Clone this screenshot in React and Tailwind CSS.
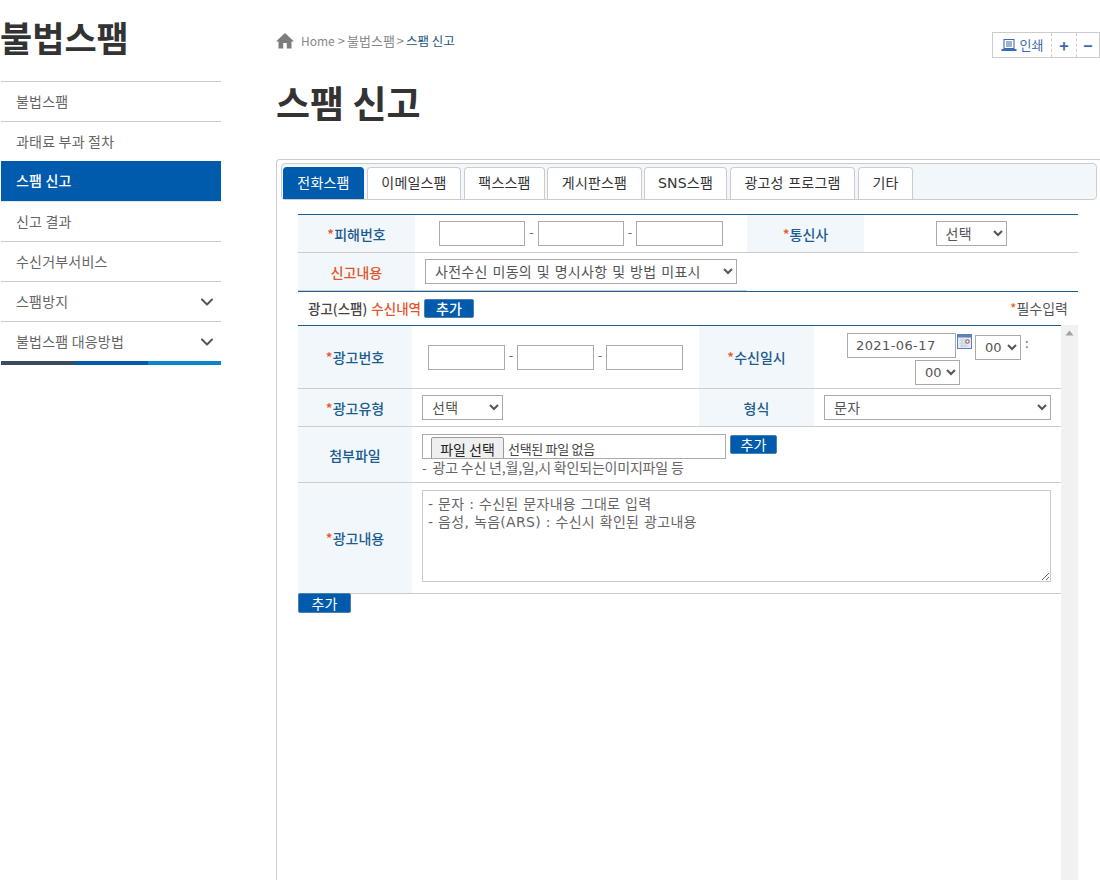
import React from "react";
import { ChevronDown } from "lucide-react";

const Star = () => <span className="text-[#e8562a]">*</span>;
const Th = ({ w, star, children, orange, h }) => (
  <div className={`${w} ${h || ""} shrink-0 bg-[#f2f7fb] pt-px flex items-center justify-center text-[14px] font-medium ${orange ? "text-[#e2562c]" : "text-[#1c5c8f]"}`}>
    {star && <Star />}
    {children}
  </div>
);
const Txt = ({ w }) => <input type="text" className={`${w} h-[25px] border border-[#aaa] bg-white`} />;
const Dash = ({ w }) => <span className={`${w} text-center text-[#666] text-[13px] -mt-1`}>-</span>;
const Sel = ({ w, children, small }) => (
  <select className={`${w} h-[25px] border border-[#aaa] bg-white pl-[5px] text-[#555] font-['DejaVu_Sans','Noto_Sans_CJK_KR',sans-serif] ${small ? "text-[13px]" : "text-[14px] tracking-[0.3px]"}`}>
    {children}
  </select>
);
const Btn = ({ w, h, children, cls }) => (
  <button className={`${w} ${h} ${cls || ""} flex items-center justify-center rounded-[2px] border border-[#4a7fae] bg-[#005bac] text-white text-[14px]`}>
    {children}
  </button>
);
const tabs = [
  ["전화스팸", "w-[81px] mr-[3px] bg-[#005bac] border-[#005bac] text-white"],
  ["이메일스팸", "w-[94px] mr-[3px] bg-white border-[#ccc] text-[#333]"],
  ["팩스스팸", "w-[81px] mr-[2px] bg-white border-[#ccc] text-[#333]"],
  ["게시판스팸", "w-[95px] mr-[2px] bg-white border-[#ccc] text-[#333]"],
  ["SNS스팸", "w-[83px] mr-[3px] bg-white border-[#ccc] text-[#333]"],
  ["광고성 프로그램", "w-[125px] mr-[3px] bg-white border-[#ccc] text-[#333]"],
  ["기타", "w-[55px] bg-white border-[#ccc] text-[#333]"],
];
const nav = ["불법스팸", "과태료 부과 절차", "스팸 신고", "신고 결과", "수신거부서비스", "스팸방지", "불법스팸 대응방법"];

export default function App() {
  return (
    <div className="w-[1100px] h-[880px] overflow-hidden bg-white flex font-['Noto_Sans_CJK_KR',sans-serif] text-[#555]">
      <aside className="w-[221px] shrink-0 pl-px">
        <div className="h-[81px] -ml-px pb-[6px] flex items-center text-[35px] font-bold text-[#333]">불법스팸</div>
        {nav.map((n, i) => (
          <div
            key={n}
            className={`h-10 pl-[15px] pr-[4px] flex items-center justify-between text-[14px] tracking-[0.2px] border-t ${
              i === 2 ? "bg-[#005bac] border-[#005bac] text-white font-medium pb-[2px]" : i === 3 ? "border-[#dfe6ec] text-[#666]" : "border-[#ccc] text-[#666]"
            }`}
          >
            <span>{n}</span>
            {i >= 5 && <ChevronDown size={20} strokeWidth={2.4} className="text-[#555]" />}
          </div>
        ))}
        <div className="flex h-1">
          <div className="w-[74px] bg-[#3d4a66]" />
          <div className="w-[73px] bg-[#005bac]" />
          <div className="w-[73px] bg-[#0a87cc]" />
        </div>
      </aside>
      <main className="ml-[55px] w-[824px] shrink-0">
        <div className="h-[159px]">
          <div className="pt-[32px] flex justify-between items-start">
            <div className="flex items-center h-[18px] text-[13px] text-[#888]">
              <svg width="18" height="16" viewBox="0 0 18 16" className="mr-[7px]">
                <path d="M9 0 L18 8.5 L15.5 8.5 L15.5 15.5 L10.8 15.5 L10.8 10 L7.2 10 L7.2 15.5 L2.5 15.5 L2.5 8.5 L0 8.5 Z" fill="#7d7d7d" />
              </svg>
              <span className="text-[12px]">Home</span>
              <span className="ml-[3px] mr-[2px]">&gt;</span>
              <span>불법스팸</span>
              <span className="ml-[2px] mr-[2px]">&gt;</span>
              <span className="text-[#23527c] text-[12.5px]">스팸 신고</span>
            </div>
            <div className="w-[108px] h-[26px] border border-[#ccc] flex items-center text-[#3b6cb0] text-[13px]">
              <div className="w-[58px] flex items-center justify-center gap-[3px] h-full">
                <svg width="16" height="14" viewBox="0 0 16 14" fill="none" stroke="#3b6cb0" strokeWidth="1.1">
                  <path d="M3 1.5h10v9H3zM5 4h6M5 6h6M5 8h6M1 11.5h14v1H1z" />
                </svg>
                <span>인쇄</span>
              </div>
              <div className="w-[25px] h-full flex items-center justify-center border-l border-dashed border-[#ccc] font-bold text-[16px]">+</div>
              <div className="flex-1 h-full flex items-center justify-center border-l border-dashed border-[#ccc] font-bold text-[16px]">−</div>
            </div>
          </div>
          <h1 className="mt-[18px] text-[37px] font-bold text-[#333] leading-[52px]">스팸 신고</h1>
        </div>

        <section className="h-[721px] border-l border-t border-[#ccc] rounded-tl-[4px] pl-[4px] pr-[3px] pt-[3px]">
          <div className="h-[37px] border border-[#ccc] rounded-[4px] bg-[#f2f7fb] pl-px flex items-end">
            {tabs.map(([t, c]) => (
              <div key={t} className={`h-[32px] border border-b-0 rounded-t-[4px] flex items-center justify-center tracking-[0.2px] font-['DejaVu_Sans','Noto_Sans_CJK_KR',sans-serif] ${c}`}>
                <span className="text-[14px]">{t}</span>
              </div>
            ))}
          </div>

          <div className="ml-[17px] mt-[14px] w-[780px] border-t border-[#1f5f8b]">
            <div className="flex h-[38px] border-b border-[#ccc]">
              <Th w="w-[117px]" star>피해번호</Th>
              <div className="w-[332px] pl-[24px] flex items-center">
                <Txt w="w-[86px]" />
                <Dash w="w-[13px]" />
                <Txt w="w-[86px]" />
                <Dash w="w-[12px]" />
                <Txt w="w-[87px]" />
              </div>
              <Th w="w-[117px]" star>통신사</Th>
              <div className="flex-1 flex items-center justify-center">
                <Sel w="w-[71px]"><option>선택</option></Sel>
              </div>
            </div>
            <div className="flex h-[39px] border-b border-[#1f5f8b]">
              <div className="w-[449px] flex border-b border-[#ccc]">
                <Th w="w-[117px]" orange>신고내용</Th>
                <div className="pl-[10px] flex items-center">
                  <Sel w="w-[312px]"><option>사전수신 미동의 및 명시사항 및 방법 미표시</option></Sel>
                </div>
              </div>
            </div>
            <div className="h-[33px] flex items-center justify-between pl-[10px] pr-[10px]">
              <div className="flex items-center text-[13.5px] font-medium text-[#444]">
                <span>광고(스팸)</span>
                <span className="ml-[4px] text-[#e2562c]">수신내역</span>
                <span className="ml-[3px]"><Btn w="w-[50px]" h="h-[19px]">추가</Btn></span>
              </div>
              <div className="text-[14px] text-[#555]"><Star />필수입력</div>
            </div>

            <div className="flex h-[555px]">
              <div className="w-[763px] border-t border-[#1f5f8b]">
                <div className="flex h-[63px] border-b border-[#ccc]">
                  <Th w="w-[114px]" star>광고번호</Th>
                  <div className="w-[287px] pl-[16px] flex items-center">
                    <Txt w="w-[77px]" />
                    <Dash w="w-[12px]" />
                    <Txt w="w-[77px]" />
                    <Dash w="w-[12px]" />
                    <Txt w="w-[77px]" />
                  </div>
                  <Th w="w-[115px]" star>수신일시</Th>
                  <div className="flex-1 pt-[7px] flex flex-col items-center">
                    <div className="flex items-start">
                      <input type="text" defaultValue="2021-06-17" className="w-[109px] h-[25px] border border-[#aaa] pl-[8px] text-[13px] tracking-[0.4px] text-[#555] font-['DejaVu_Sans',sans-serif]" />
                      <svg width="15" height="15" viewBox="0 0 15 15" className="ml-px mt-px">
                        <rect x="0.5" y="0.5" width="14" height="14" fill="#e4eaf3" stroke="#5b83b5" />
                        <rect x="1" y="1" width="13" height="2.5" fill="#5b83b5" />
                        <path d="M3 6h9M3 9h9M3 12h9M5 5v8M8 5v8" stroke="#b8c4d6" strokeWidth="0.7" />
                        <circle cx="10.5" cy="7.5" r="1.7" fill="#fff" stroke="#a33" />
                      </svg>
                      <span className="ml-[3px]"><Sel w="w-[46px]" small><option>00</option></Sel></span>
                      <span className="w-[7px] pl-[4px] text-[13px] text-[#666]">:</span>
                    </div>
                    <Sel w="w-[45px]" small><option>00</option></Sel>
                  </div>
                </div>
                <div className="flex h-[38px] border-b border-[#ccc]">
                  <Th w="w-[114px]" star>광고유형</Th>
                  <div className="w-[287px] pl-[10px] flex items-center">
                    <Sel w="w-[81px]"><option>선택</option></Sel>
                  </div>
                  <Th w="w-[115px]">형식</Th>
                  <div className="flex-1 pl-[10px] flex items-center">
                    <Sel w="w-[227px]"><option>문자</option></Sel>
                  </div>
                </div>
                <div className="flex h-[56px] border-b border-[#ccc]">
                  <Th w="w-[114px]">첨부파일</Th>
                  <div className="flex-1 pl-[10px] pt-[7px]">
                    <div className="flex items-start">
                      <div className="w-[304px] h-[25px] border border-[#aaa] overflow-hidden pl-[8px] pt-[2px] flex items-start text-[#444]">
                        <div className="w-[73px] h-[26px] shrink-0 border border-[#999] rounded-[2px] bg-[#efefef] flex justify-center pt-[1px] text-[14px] text-[#222]">파일 선택</div>
                        <span className="ml-[4px] pt-[2px] text-[13px] tracking-[-0.3px]">선택된 파일 없음</span>
                      </div>
                      <span className="ml-[4px] mt-px"><Btn w="w-[47px]" h="h-[19px]">추가</Btn></span>
                    </div>
                    <p className="text-[14px] tracking-[-0.2px] leading-[16px] text-[#666]">-&nbsp; 광고 수신 년,월,일,시 확인되는이미지파일 등</p>
                  </div>
                </div>
                <div className="flex h-[111px] border-b border-[#ccc]">
                  <Th w="w-[114px]" star>광고내용</Th>
                  <div className="flex-1 pl-[10px] pt-[7px]">
                    <textarea
                      defaultValue={"- 문자 : 수신된 문자내용 그대로 입력\n- 음성, 녹음(ARS) : 수신시 확인된 광고내용"}
                      className="block w-[629px] h-[92px] border border-[#ccc] pl-[5px] pt-[4px] text-[14px] tracking-[0.3px] leading-[18px] text-[#666] font-['DejaVu_Sans','Noto_Sans_CJK_KR',sans-serif]"
                    />
                  </div>
                </div>
                <Btn w="w-[53px]" h="h-[20px]" cls="-mt-px">추가</Btn>
              </div>
              <div className="w-[17px] bg-[#f1f1f1] flex justify-center pt-[5px]">
                <svg width="9" height="6" viewBox="0 0 9 6"><path d="M4.5 0.5 L8.5 5.5 L0.5 5.5 Z" fill="#a3a3a3" /></svg>
              </div>
            </div>
          </div>
        </section>
      </main>
    </div>
  );
}
